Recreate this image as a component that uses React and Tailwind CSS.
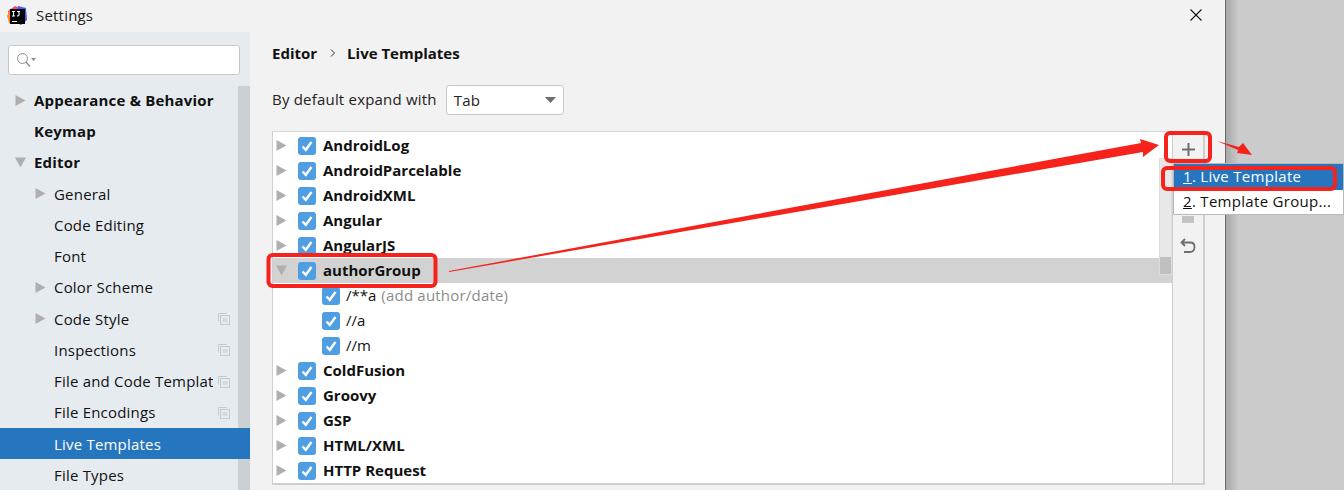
import React from "react";

const navItems = [
  { label: "Appearance & Behavior", bold: true, arrow: "right", level: 0 },
  { label: "Keymap", bold: true, level: 0 },
  { label: "Editor", bold: true, arrow: "down", level: 0 },
  { label: "General", arrow: "right", level: 1 },
  { label: "Code Editing", level: 1 },
  { label: "Font", level: 1 },
  { label: "Color Scheme", arrow: "right", level: 1 },
  { label: "Code Style", arrow: "right", level: 1, copy: true },
  { label: "Inspections", level: 1, copy: true },
  { label: "File and Code Templates", level: 1, copy: true, clip: true },
  { label: "File Encodings", level: 1, copy: true },
  { label: "Live Templates", level: 1, active: true },
  { label: "File Types", level: 1 },
];

const templates = [
  { label: "AndroidLog" },
  { label: "AndroidParcelable" },
  { label: "AndroidXML" },
  { label: "Angular" },
  { label: "AngularJS" },
  { label: "authorGroup", open: true },
  { label: "/**a", hint: "(add author/date)", child: true },
  { label: "//a", child: true },
  { label: "//m", child: true },
  { label: "ColdFusion" },
  { label: "Groovy" },
  { label: "GSP" },
  { label: "HTML/XML" },
  { label: "HTTP Request" },
];

const Triangle = ({ down, className }) => (
  <svg viewBox="0 0 11 11" className={className}>
    <path d={down ? "M0 0.5H11L5.5 10.5Z" : "M0.5 0V11L10.5 5.5Z"} fill="#afafaf" />
  </svg>
);

const Check = () => (
  <span className="w-[18px] h-[18px] rounded-[3px] bg-[#4f9ee3] flex items-center justify-center shrink-0">
    <svg viewBox="0 0 18 18" className="w-[18px] h-[18px]">
      <path d="M4.5 9.5L7.8 12.8L13.5 5" fill="none" stroke="#fff" strokeWidth="2.4" />
    </svg>
  </span>
);

const CopyIcon = () => (
  <svg viewBox="0 0 12 12" className="w-3 h-3 shrink-0">
    <path d="M0.5 8.5V0.5H8.5" fill="none" stroke="#c3cad0" />
    <rect x="2.5" y="2.5" width="9" height="9" fill="none" stroke="#c3cad0" />
    <path d="M4.5 6H9.5M4.5 8H9.5" stroke="#c3cad0" />
  </svg>
);

const Logo = () => (
  <svg viewBox="0 0 20 20" className="w-5 h-5">
    <path d="M1 5L8 0L13 2L9 18L3 18Z" fill="#f9457f" />
    <path d="M11 0L19 2L20 14L14 19L8 16Z" fill="#4f5be8" />
    <path d="M0 10L3 4L8 18L2 17Z" fill="#fb8b2e" />
    <rect x="3" y="3" width="15" height="15" fill="#000" />
    <path d="M5 5.5H8M6.5 5.5V10M5 10H8M10 5.5H13M12 5.5V9Q12 10 10 10" stroke="#fff" strokeWidth="1.1" fill="none" />
    <path d="M5 15.5H10" stroke="#fff" strokeWidth="1" />
  </svg>
);

const NavRow = ({ item }) => (
  <div className={`h-[31.25px] flex items-center relative tracking-[0.2px] ${item.active ? "bg-[#2675bf] text-white" : "text-[#111]"}`}>
    <div className={`flex items-center ${item.level ? "pl-[35px]" : "pl-[15px]"}`}>
      <span className="w-[19px] shrink-0">
        {item.arrow && <Triangle down={item.arrow === "down"} className="w-[11px] h-[11px]" />}
      </span>
      <span className={`whitespace-nowrap overflow-hidden ${item.clip ? "w-[159px]" : ""} ${item.bold ? "font-bold" : ""}`}>
        {item.label}
      </span>
    </div>
    {item.copy && (
      <span className="absolute left-[218px] top-[10px]">
        <CopyIcon />
      </span>
    )}
  </div>
);

const TemplateRow = ({ item }) => (
  <div className={`h-[25px] flex items-center ${item.open ? "bg-[#d2d2d2]" : ""} ${item.child ? "pl-[49px]" : "pl-[3px]"}`}>
    {!item.child && (
      <span className="w-[22px] shrink-0">
        <Triangle down={item.open} className="w-[11px] h-[11px]" />
      </span>
    )}
    <Check />
    <span className={`text-[#111] whitespace-nowrap ${item.child ? "ml-[6px]" : "ml-[7px] font-bold"}`}>{item.label}</span>
    {item.hint && <span className="ml-[5px] text-[#8c8c8c] whitespace-nowrap tracking-[0.2px]">{item.hint}</span>}
  </div>
);

const Annotations = () => (
  <svg viewBox="0 0 1344 490" className="absolute inset-0 w-[1344px] h-[490px] pointer-events-none">
    <g fill="none" stroke="#f5231c" strokeWidth="4">
      <rect x="268.5" y="255" width="167" height="31" rx="4" />
      <rect x="1166" y="133" width="44" height="28" rx="4" />
      <rect x="1163" y="168" width="172" height="21" rx="4" />
    </g>
    <path d="M449 271L1141 143L1140 139L1159 145L1143 157L1143 152L449 272Z" fill="#f5231c" />
    <path d="M1217 141L1239 147L1243 143L1252 155L1237 153L1238 150Z" fill="#f5231c" />
  </svg>
);

export default function App() {
  return (
    <div className="relative w-[1344px] h-[490px] overflow-hidden flex bg-[#cbcbcb] text-[15px] font-['Open_Sans','Liberation_Sans',sans-serif]">
      <div className="w-[1225px] h-full bg-[#f2f2f2] flex flex-col shrink-0">
        {/* Title bar */}
        <div className="h-8 flex items-center shrink-0 pl-[7px] pr-[23px]">
          <Logo />
          <span className="ml-[9px] -mt-[2px] text-[#222] tracking-[0.2px]">Settings</span>
          <svg viewBox="0 0 12 12" className="w-3 h-3 ml-auto -mt-[2px]">
            <path d="M0.5 0.5L11.5 11.5M11.5 0.5L0.5 11.5" stroke="#111" strokeWidth="1.1" />
          </svg>
        </div>

        <div className="flex flex-1 min-h-0">
          {/* Sidebar */}
          <div className="w-[250px] bg-[#e6ebf0] shrink-0 relative flex flex-col">
            <div className="mt-[13px] ml-[8px] w-[232px] h-[30px] shrink-0 bg-white border border-[#c9c9c9] rounded-[3px] flex items-center pl-[7px]">
              <svg viewBox="0 0 21 16" className="w-[21px] h-4">
                <circle cx="6.5" cy="6.5" r="5" fill="none" stroke="#8e8e8e" />
                <path d="M10 10L14 14.5" stroke="#8e8e8e" strokeWidth="1.5" />
                <path d="M15 6H20L17.5 9Z" fill="#8e8e8e" />
              </svg>
            </div>
            <div className="absolute left-[238px] top-[54px] bottom-0 w-3 bg-[#cbd0d4]" />
            <div className="mt-[9.4px] relative">
              {navItems.map((item) => (
                <NavRow key={item.label} item={item} />
              ))}
            </div>
          </div>

          {/* Main panel */}
          <div className="flex-1 flex flex-col pl-[22px] pr-[20px] pb-[5px] min-w-0">
            <div className="h-[42px] flex items-center font-bold text-[#111] shrink-0">
              <span>Editor</span>
              <svg viewBox="0 0 6 8" className="w-[6px] h-2 ml-[13px] mr-[11px]">
                <path d="M1 0.5L4.5 4L1 7.5" fill="none" stroke="#333" />
              </svg>
              <span>Live Templates</span>
            </div>
            <div className="mt-[11px] h-[30px] flex items-center shrink-0 text-[#222]">
              <span className="tracking-[0.2px] -mt-[2px]">By default expand with</span>
              <div className="ml-[9px] w-[118px] h-[30px] bg-white border border-[#c9c9c9] rounded-[3px] flex items-center justify-between pl-[7px] pr-[7px]">
                <span className="tracking-[0.2px]">Tab</span>
                <svg viewBox="0 0 11 6" className="w-[11px] h-[6px]">
                  <path d="M0 0H11L5.5 6Z" fill="#6e6e6e" />
                </svg>
              </div>
            </div>

            <div className="mt-[16px] flex-1 flex border-2 border-l border-t border-[#cfcfcf] border-t-[#d5d5d5] min-h-0">
              <div className="flex-1 bg-white relative overflow-hidden pt-[1px] min-w-0">
                {templates.map((item) => (
                  <TemplateRow key={item.label} item={item} />
                ))}
                <div className="absolute right-0 top-[26px] w-[13px] h-[117px] bg-[#e8e8e8] border border-[#dcdcdc]">
                  <div className="absolute bottom-0 left-0 right-0 h-[17px] bg-[#c0c0c0]" />
                </div>
              </div>
              {/* Toolbar */}
              <div className="w-[31px] border-l border-[#cfcfcf] flex flex-col items-center shrink-0 bg-[#f2f2f2] pt-[11px]">
                <svg viewBox="0 0 13 13" className="w-[13px] h-[13px] ml-[1px]">
                  <path d="M6.5 0V13M0 6.5H13" stroke="#6e6e6e" strokeWidth="2" />
                </svg>
                <div className="mt-[60px] w-3 h-[7px] bg-[#c4c4c4]" />
                <svg viewBox="0 0 16 16" className="w-4 h-4 mt-[15px]">
                  <path d="M5 1L1.5 4.5L5 8M2 4.5H10.5Q14.5 4.5 14.5 9T10.5 14H4" fill="none" stroke="#6e6e6e" strokeWidth="1.8" />
                </svg>
              </div>
            </div>
          </div>
        </div>
      </div>

      {/* Window edge and shadow */}
      <div className="w-[14px] h-full border-l border-[#6a6a6a] bg-gradient-to-r from-[#a8a8a8] to-[#cbcbcb] shrink-0" />

      {/* Popup menu */}
      <div className="absolute left-[1173px] top-[163px] w-[171px] h-[52px] bg-white border border-[#b9b9b9] text-[15px] tracking-[0.3px]">
        <div className="h-[26px] bg-[#2675bf] text-white flex items-center pl-[9px] pb-[2px]">
          <span><span className="underline">1</span>. Live Template</span>
        </div>
        <div className="h-[24px] text-[#111] flex items-center pl-[9px] pb-[2px]">
          <span className="whitespace-nowrap"><span className="underline">2</span>. Template Group...</span>
        </div>
      </div>

      <Annotations />
    </div>
  );
}
